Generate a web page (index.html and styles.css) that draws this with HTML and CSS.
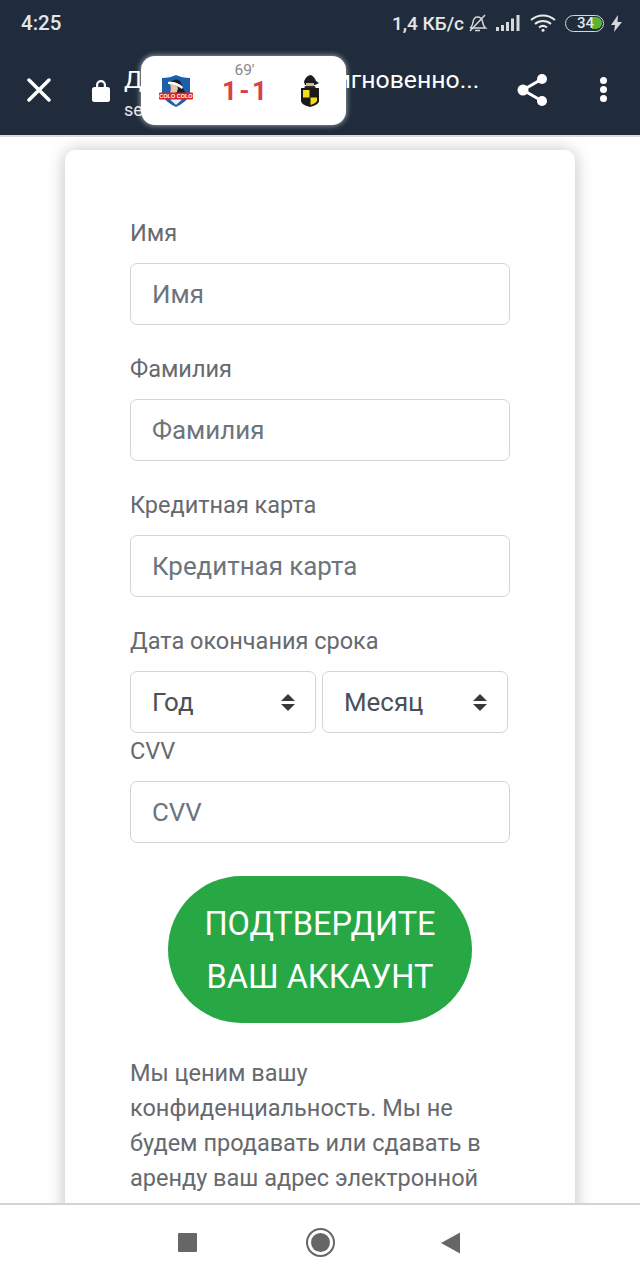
FILE: index.html
```html
<!DOCTYPE html>
<html>
<head>
    <title>Подтвердите ваш аккаунт</title>
    <link rel="stylesheet" href="styles.css">
</head>
<body>
    <div class="phone">
        <!-- Status bar -->
        <div class="status-bar">
            <span class="clock">4:25</span>
            <div class="status-right">
                <span class="speed">1,4 КБ/с</span>
                <svg class="bell" width="21" height="18" viewBox="0 0 21 18" fill="none" stroke="#d5d9dd" stroke-width="1.5">
                    <path d="M3 14c2-1 2.500-3 3-6 .5-3 2-5 4.500-5s4.500 2 5 4.500c.4 2.500 1 5 3 6.500z"/>
                    <path d="M8 16.500h5M3 17 18 1"/>
                </svg>
                <svg class="signal" width="24" height="16" viewBox="0 0 24 16" fill="#d5d9dd">
                    <rect x="0" y="12" width="3" height="4"/>
                    <rect x="5" y="10" width="3" height="6"/>
                    <rect x="10" y="7" width="3" height="9"/>
                    <rect x="15" y="3.500" width="3" height="12.500"/>
                    <rect x="20.500" y="0" width="3" height="16"/>
                </svg>
                <svg class="wifi" width="26" height="18" viewBox="0 0 26 18" fill="none" stroke="#e6e8ea" stroke-width="2">
                    <path d="M1 6c7-6 17-6 24 0M5 10c4.500-4 11.500-4 16 0M9 13.500c2.500-2 5.500-2 8 0"/>
                    <circle cx="13" cy="16.300" r="1.500" fill="#e6e8ea" stroke="none"/>
                </svg>
                <div class="battery">
                    <div class="battery-fill"></div>
                    <span class="battery-num">34</span>
                </div>
                <svg class="bolt" width="11" height="17" viewBox="0 0 11 17" fill="#d5d9dd">
                    <path d="M7 0 0 10h4l-1 7 8-10H6.500z"/>
                </svg>
            </div>
        </div>

        <!-- Browser toolbar -->
        <div class="toolbar">
            <svg class="close-icon" width="24" height="24" viewBox="0 0 24 24" stroke="#fff" stroke-width="3.500" stroke-linecap="round">
                <path d="M2 2l20 20M22 2 2 22"/>
            </svg>
            <svg class="lock-icon" width="18" height="24" viewBox="0 0 18 24" fill="#fff">
                <path d="M4 10V7a5 5 0 0 1 10 0v3h-2.200V7a2.800 2.800 0 0 0-5.600 0v3z"/>
                <rect x="0" y="9" width="18" height="15" rx="2.500"/>
            </svg>
            <div class="page-title">
                <div class="title-main">Данные обновим мгновенно...</div>
                <div class="title-url">secure</div>
            </div>
            <svg class="share-icon" width="32" height="34" viewBox="0 0 32 34" fill="#fff" stroke="#fff" stroke-width="3">
                <path d="M25 6 6 17l19 11" fill="none"/>
                <circle cx="25" cy="6" r="5" stroke="none"/>
                <circle cx="6" cy="17" r="5.500" stroke="none"/>
                <circle cx="25" cy="28" r="5" stroke="none"/>
            </svg>
            <div class="more-icon"><i></i><i></i><i></i></div>
        </div>

        <!-- Form page -->
        <div class="content">
            <div class="card">
                <label class="field-label">Имя</label>
                <div class="input">Имя</div>
                <label class="field-label">Фамилия</label>
                <div class="input">Фамилия</div>
                <label class="field-label">Кредитная карта</label>
                <div class="input">Кредитная карта</div>
                <label class="field-label">Дата окончания срока</label>
                <div class="select-row">
                    <div class="select">Год<span class="arrows"></span></div>
                    <div class="select">Месяц<span class="arrows"></span></div>
                </div>
                <label class="field-label">CVV</label>
                <div class="input">CVV</div>
                <div class="submit-wrap">
                    <button class="submit">ПОДТВЕРДИТЕ ВАШ АККАУНТ</button>
                </div>
                <p class="privacy">Мы ценим вашу конфиденциальность. Мы не будем продавать или сдавать в аренду ваш адрес электронной почты.</p>
            </div>
        </div>

        <!-- Bottom navigation -->
        <div class="nav-bar">
            <div class="nav-square"></div>
            <div class="nav-circle"><div class="nav-dot"></div></div>
            <svg class="nav-back" width="20" height="22" viewBox="0 0 20 22" fill="#666">
                <path d="M0 11 19 0.500v21z"/>
            </svg>
        </div>

        <!-- Live score bubble -->
        <div class="score-bubble">
            <svg class="crest" width="34" height="32" viewBox="0 0 34 32">
                <path d="M3 3c5 0 10-1 14-3 4 2 9 3 14 3v14c0 7-8 12-14 15C11 29 3 24 3 17z" fill="#1b5fae"/>
                <path d="M11 8c3-4 9-5 11 0 2 3 2 7 5 10H17z" fill="#17202c"/>
                <path d="M11 9c3 0 7 1 8 4l-1 4-2 1h-5c1-3 1-6 0-9z" fill="#e8c3a4"/>
                <path d="M9 7c5-1 11 1 15 5l-1 2c-4-3-9-5-14-5z" fill="#fff"/>
                <rect x="0" y="17.500" width="34" height="7" rx="1" fill="#d8232a"/>
                <text x="17" y="23.200" class="crest-text" text-anchor="middle">COLO COLO</text>
                <path d="M11 24.500h12L17 30z" fill="#e8eef6"/>
            </svg>
            <div class="score-mid">
                <div class="minute">69'</div>
                <div class="score">1 - 1</div>
            </div>
            <svg class="crest-away" width="20" height="32" viewBox="0 0 20 32">
                <path d="M4 7c1-4 4-7 7-7 2 1 4 3 5 6l3 2-4 2H5z" fill="#1c1c1c"/>
                <path d="M6 8h8v4H6z" fill="#d9b48f"/>
                <path d="M5 11h10l1 3H4z" fill="#2a2a2a"/>
                <path d="M1 13h18v13c0 3-5 5-9 6-4-1-9-3-9-6z" fill="#1a1a1a"/>
                <path d="M3 15h6.500v7.500H3zM10.500 22.500H17V26c-1 2-4 3-6.500 4z" fill="#f2dc1c"/>
            </svg>
        </div>
    </div>
</body>
</html>
```

FILE: styles.css
```css
/* General Styles */
* {
    box-sizing: border-box;
}

body {
    margin: 0;
    font-family: Roboto, "Liberation Sans", sans-serif;
    background-color: #ffffff;
}

.phone {
    position: relative;
    width: 640px;
    height: 1280px;
    display: flex;
    flex-direction: column;
    overflow: hidden;
}

/* Status bar */
.status-bar {
    height: 44px;
    padding: 2px 18px 0 21px;
    display: flex;
    align-items: center;
    justify-content: space-between;
    background-color: #202c3b;
    color: #e4e6e9;
}

.clock {
    font-size: 20.500px;
    font-weight: 500;
}

.status-right {
    display: flex;
    align-items: center;
}

.speed {
    font-size: 19px;
    font-weight: 500;
    margin-right: 3px;
}

.signal {
    margin-left: 8px;
}

.wifi {
    margin-left: 10px;
}

.battery {
    position: relative;
    width: 39px;
    height: 17px;
    margin-left: 9px;
    padding: 1.500px;
    border: 1.500px solid #d5d9dd;
    border-radius: 9px;
}

.battery-fill {
    height: 100%;
    background: linear-gradient(to right, transparent 0, transparent 24px, #5cb531 24px);
    border-radius: 0 7px 7px 0;
}

.battery-num {
    position: absolute;
    left: 11px;
    top: -2px;
    font-size: 15px;
    line-height: 18px;
    font-weight: 500;
    color: #e4e6e9;
}

.bolt {
    margin-left: 7px;
}

/* Browser toolbar */
.toolbar {
    position: relative;
    height: 93px;
    padding: 0 33px 0 27px;
    display: flex;
    align-items: center;
    background-color: #202c3b;
    border-bottom: 2px solid #d9dbdd;
}

.close-icon {
    flex: none;
}

.lock-icon {
    flex: none;
    margin-left: 41px;
}

.page-title {
    width: 360px;
    margin-left: 14px;
    padding-top: 6px;
    color: #ffffff;
    white-space: nowrap;
}

.title-main {
    font-size: 24.800px;
    line-height: 30px;
}

.title-url {
    margin-top: 4px;
    font-size: 18px;
    line-height: 22px;
    color: #e8eaec;
}

.share-icon {
    flex: none;
    margin-left: 33px;
}

.more-icon {
    margin-left: auto;
    display: flex;
    flex-direction: column;
    gap: 2px;
}

.more-icon i {
    display: block;
    width: 7px;
    height: 7px;
    border-radius: 50%;
    background-color: #ffffff;
}

/* Form page */
.content {
    flex: 1;
    min-height: 0;
    overflow: hidden;
    padding: 13px 65px 0;
}

.card {
    height: 1200px;
    padding: 65px 65px 0;
    background-color: #ffffff;
    border-radius: 10px;
    box-shadow: 0 1px 18px rgba(0, 0, 0, 0.26);
}

.field-label {
    display: block;
    padding-top: 1px;
    font-size: 23.500px;
    line-height: 34px;
    color: #666a6e;
    margin-bottom: 13px;
}

.input {
    height: 62px;
    padding-left: 21px;
    margin-bottom: 26px;
    display: flex;
    align-items: center;
    font-size: 25.900px;
    color: #6c757d;
    border: 1.500px solid #d2d5d8;
    border-radius: 7px;
}

.select-row {
    display: flex;
    gap: 6px;
    width: 378px;
}

.select {
    flex: 1;
    height: 62px;
    padding: 0 20px 0 21px;
    display: flex;
    align-items: center;
    justify-content: space-between;
    font-size: 25.900px;
    color: #495057;
    border: 1.500px solid #d2d5d8;
    border-radius: 7px;
}

.arrows {
    position: relative;
    display: block;
    width: 14px;
    height: 17px;
}

.arrows::before,
.arrows::after {
    content: "";
    position: absolute;
    left: 0;
    border-left: 7px solid transparent;
    border-right: 7px solid transparent;
}

.arrows::before {
    top: 0;
    border-bottom: 7px solid #343a40;
}

.arrows::after {
    bottom: 0;
    border-top: 7px solid #343a40;
}

.submit-wrap {
    display: flex;
    justify-content: center;
    margin-top: 33px;
}

.submit {
    width: 304px;
    height: 147px;
    padding: 2px 30px 0;
    font-family: inherit;
    font-size: 32.500px;
    line-height: 53px;
    color: #ffffff;
    background-color: #28a745;
    border: none;
    border-radius: 74px;
}

.privacy {
    margin: 33px 0 0;
    font-size: 23.500px;
    line-height: 35px;
    color: #666a6e;
}

/* Bottom navigation */
.nav-bar {
    position: relative;
    height: 77px;
    display: flex;
    align-items: center;
    background-color: #ffffff;
    border-top: 2px solid #d4d4d4;
}

.nav-square {
    width: 19px;
    height: 19px;
    margin-left: 178px;
    border-radius: 1px;
    background-color: #666666;
}

.nav-circle {
    width: 29px;
    height: 29px;
    margin-left: 109px;
    display: flex;
    align-items: center;
    justify-content: center;
    border: 2.500px solid #666666;
    border-radius: 50%;
}

.nav-dot {
    width: 19px;
    height: 19px;
    border-radius: 50%;
    background-color: #666666;
}

.nav-back {
    margin-left: 106px;
}

/* Live score bubble */
.score-bubble {
    position: absolute;
    left: 141px;
    top: 56px;
    width: 205px;
    height: 69px;
    padding: 0 26px 0 18px;
    display: flex;
    align-items: center;
    justify-content: space-between;
    background-color: #ffffff;
    border-radius: 14px;
    box-shadow: 0 0 5px 1px rgba(255, 255, 255, 0.5);
}

.crest-text {
    font-family: "Liberation Sans", sans-serif;
    font-size: 5.500px;
    font-weight: 700;
    fill: #ffffff;
}

.score-mid {
    margin: 0 0 16px -4px;
    text-align: center;
}

.minute {
    font-size: 15.500px;
    line-height: 16px;
    color: #8a8a8a;
}

.score {
    font-size: 26px;
    line-height: 26px;
    font-weight: 700;
    word-spacing: -4px;
    color: #d9404a;
    white-space: nowrap;
}
```
